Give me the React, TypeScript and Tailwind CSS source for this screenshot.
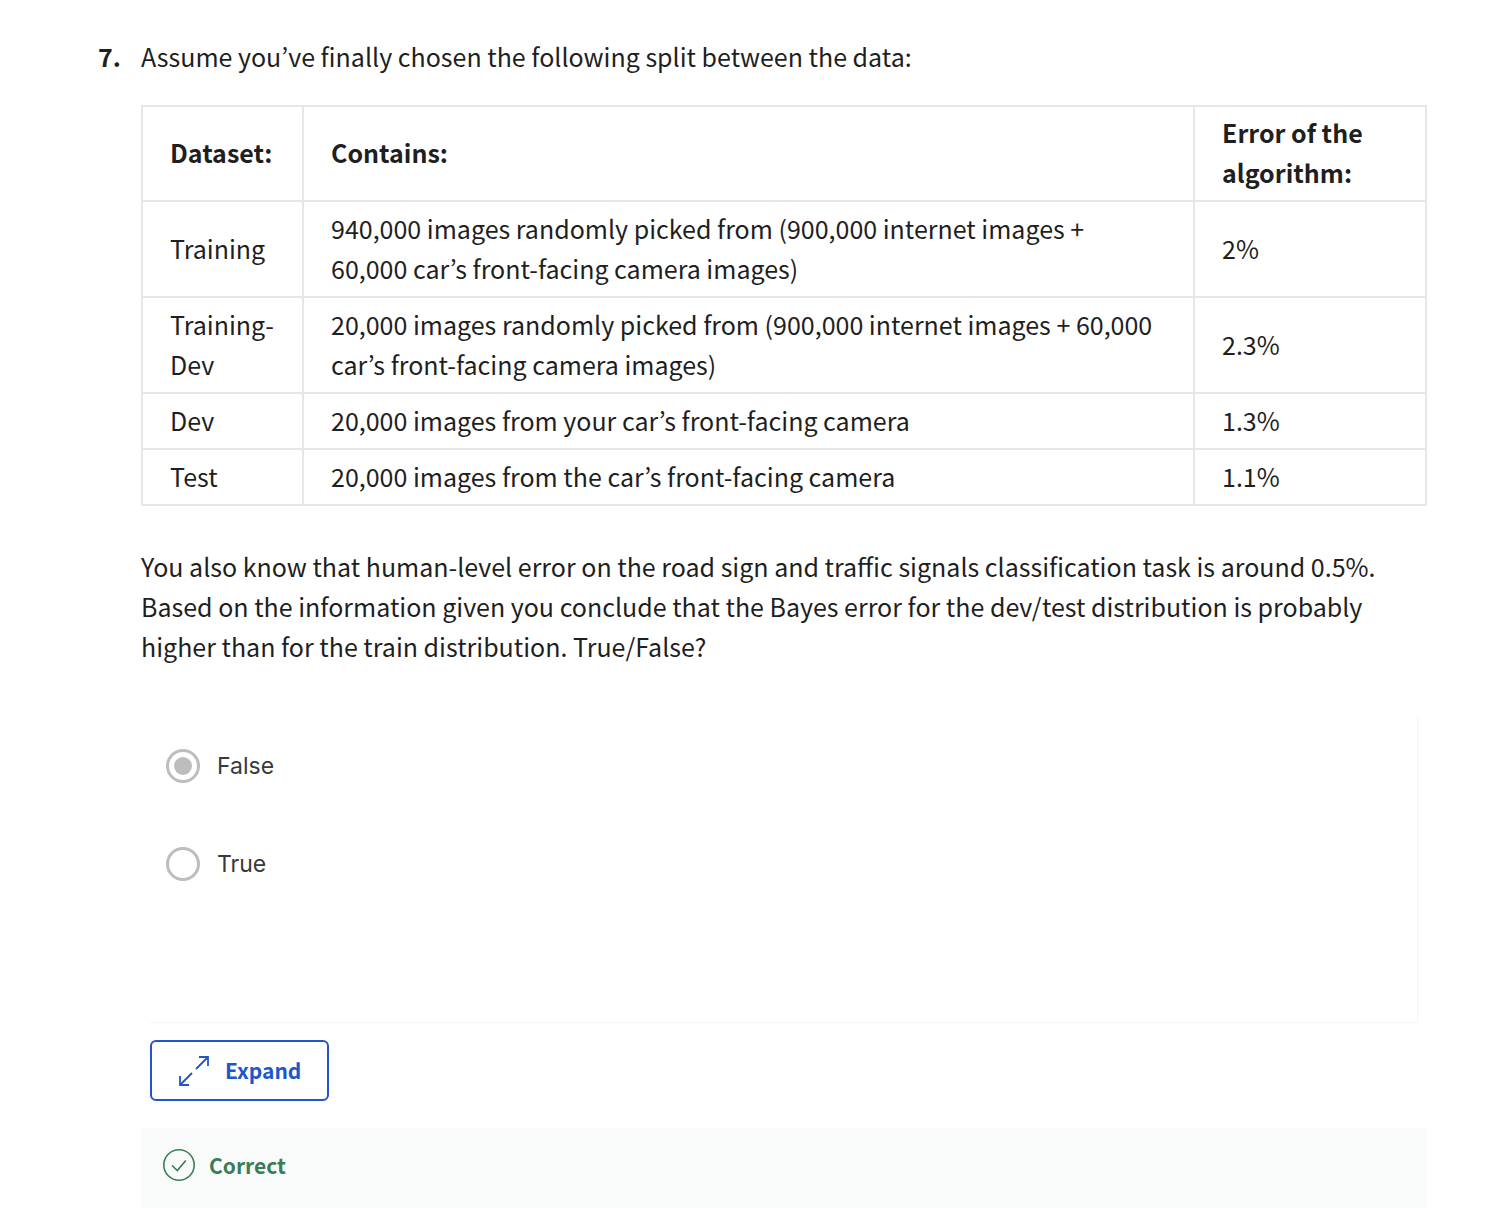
import { useState } from "react";

const rows = [
  {
    name: "Training",
    contains:
      "940,000 images randomly picked from (900,000 internet images + 60,000 car’s front-facing camera images)",
    error: "2%",
  },
  {
    name: "Training-Dev",
    contains:
      "20,000 images randomly picked from (900,000 internet images + 60,000 car’s front-facing camera images)",
    error: "2.3%",
  },
  { name: "Dev", contains: "20,000 images from your car’s front-facing camera", error: "1.3%" },
  { name: "Test", contains: "20,000 images from the car’s front-facing camera", error: "1.1%" },
];

const headCell = "border-2 border-[#e5e7e8] px-[27px] pt-[5px] pb-2 text-left align-middle";
const cell = "border-2 border-[#e5e7e8] px-[27px] pt-[6px] pb-2 text-left align-middle";

function Option({
  label,
  checked,
  onSelect,
}: {
  label: string;
  checked: boolean;
  onSelect: () => void;
}) {
  return (
    <label className="flex items-center gap-[17px]">
      <input
        type="radio"
        name="answer"
        value={label}
        checked={checked}
        onChange={onSelect}
        className="grid size-[34px] shrink-0 appearance-none place-content-center rounded-full border-[3px] border-[#bdbdbd] bg-white before:size-[18px] before:rounded-full checked:before:bg-[#bdbdbd]"
      />
      <span className="font-[Inter,sans-serif] text-[23px] leading-8 text-[#373a3c]">{label}</span>
    </label>
  );
}

export default function App() {
  const [answer, setAnswer] = useState("False");
  return (
    <main className="flex min-h-screen bg-white pr-[65px] pl-[98px] pt-9 font-['Noto_Sans_CJK_KR',sans-serif] text-[25px] leading-10 text-[#1f1f1f]">
      <div className="w-[43px] shrink-0 font-bold">7.</div>
      <section className="min-w-0 grow">
        <p>Assume you’ve finally chosen the following split between the data:</p>
        <table className="mt-[29px] w-full table-fixed border-collapse">
          <colgroup>
            <col className="w-[161px]" />
            <col />
            <col className="w-[232px]" />
          </colgroup>
          <thead>
            <tr>
              <th className={headCell}>Dataset:</th>
              <th className={headCell}>Contains:</th>
              <th className={headCell}>Error of the algorithm:</th>
            </tr>
          </thead>
          <tbody>
            {rows.map((r) => (
              <tr key={r.name}>
                <td className={cell}>{r.name}</td>
                <td className={cell}>{r.contains}</td>
                <td className={cell}>{r.error}</td>
              </tr>
            ))}
          </tbody>
        </table>
        <p className="mt-10">
          You also know that human-level error on the road sign and traffic signals classification
          task is around 0.5%. Based on the information given you conclude that the Bayes error for
          the dev/test distribution is probably higher than for the train distribution. True/False?
        </p>
        <fieldset
          aria-label="Answer"
          className="mx-[9px] mt-[50px] flex flex-col gap-16 border-r border-b border-[#f5f5f5] pt-[33px] pb-[141px] pl-4"
        >
          <Option label="False" checked={answer === "False"} onSelect={() => setAnswer("False")} />
          <Option label="True" checked={answer === "True"} onSelect={() => setAnswer("True")} />
        </fieldset>
        <button
          type="button"
          className="mt-[17px] ml-[9px] flex h-[61px] items-center gap-[15px] rounded-md border-2 border-[#2055cd] px-[26px] text-[21px] font-bold text-[#2055cd]"
        >
          <svg className="size-8" viewBox="0 0 32 32" fill="none" stroke="currentColor" strokeWidth="1.8" aria-hidden="true">
            <path d="M18 14 30 2M21 2h9v9M14 18 2 30M2 21v9h9" />
          </svg>
          <span className="pb-0.5">Expand</span>
        </button>
        <div className="mt-[27px] flex h-20 items-center gap-3.5 bg-[#f8fbf9] px-[22px] pb-1.5 text-[21px] font-bold text-[#3a7d55]">
          <svg className="size-8" viewBox="0 0 32 32" fill="none" stroke="currentColor" strokeWidth="1.6" aria-hidden="true">
            <circle cx="16" cy="16" r="15.2" />
            <path d="m9 16.5 5.3 5 8.5-10" />
          </svg>
          Correct
        </div>
      </section>
    </main>
  );
}
